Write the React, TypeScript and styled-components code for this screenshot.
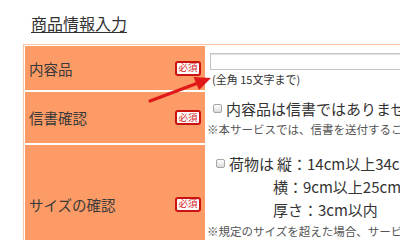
import React from 'react'
import styled, { createGlobalStyle } from 'styled-components'

const GlobalStyle = createGlobalStyle`
  html, body {
    margin: 0;
    padding: 0;
    background: #fff;
    overflow: hidden;
  }
  body {
    font-family: "Noto Sans CJK JP", "Noto Sans", sans-serif;
    color: #333;
  }
`

const Page = styled.div`
  position: relative;
  width: 400px;
  height: 240px;
  padding: 12px 0 0 23px;
  box-sizing: border-box;
  overflow: hidden;
`

const Title = styled.h2`
  margin: 0 0 10px 8px;
  font-size: 16px;
  font-weight: normal;
  line-height: 22px;
  height: 22px;
  text-decoration: underline;
  text-underline-offset: 2px;
  text-decoration-thickness: 1px;
  color: #333;
`

const Table = styled.div`
  display: grid;
  grid-template-columns: 180px 440px;
  grid-template-rows: 44px 51px 118px;
  gap: 2px;
  width: max-content;
  padding: 1px;
  border: 1px solid #fcc4a6;
  background: #fff;
`

const LabelCell = styled.div`
  display: flex;
  align-items: center;
  justify-content: space-between;
  padding: 0 4px;
  background: #fd9b66;
  font-size: 14.5px;
  color: #3a3a3a;
`

const Badge = styled.span`
  display: inline-flex;
  align-items: center;
  justify-content: center;
  width: 26px;
  height: 15px;
  box-sizing: border-box;
  border: 2px solid #cc1111;
  border-radius: 3px;
  background: #fff;
  color: #d42020;
  font-size: 9.5px;
  line-height: 1;
`

const FieldCell = styled.div<{ $top: number }>`
  display: flex;
  flex-direction: column;
  align-items: flex-start;
  padding-top: ${p => p.$top}px;
  background: #fff;
  white-space: nowrap;
  overflow: hidden;
`

const TextInput = styled.input`
  margin: 0 0 0 3px;
  width: 300px;
  height: 17px;
  box-sizing: border-box;
  border: 1px solid #c4c4c4;
  box-shadow: inset 0 1px 1px rgba(0, 0, 0, 0.12);
  padding: 0 3px;
  font-size: 12px;
`

const Hint = styled.div`
  margin: 2px 0 0 5px;
  font-size: 11px;
  line-height: 14px;
  color: #333;
`

const CheckLine = styled.label<{ $indent: number }>`
  display: flex;
  align-items: center;
  height: 23px;
  padding-left: ${p => p.$indent}px;
  font-size: 15px;
  color: #333;
`

const Box = styled.span`
  display: inline-block;
  flex: none;
  width: 9px;
  height: 9px;
  box-sizing: border-box;
  margin-right: 4px;
  border: 1px solid #a6a6a6;
  border-radius: 2px;
  background: linear-gradient(#fdfdfd, #dcdcdc);
`

const Note = styled.div<{ $height: number }>`
  font-size: 11.5px;
  line-height: ${p => p.$height}px;
  color: #555;
`

const SizeLead = styled.span`
  width: 48px;
`

const SizeLines = styled.div`
  display: flex;
  flex-direction: column;
  padding-left: 66px;
`

const SizeLine = styled.div`
  height: 23px;
  line-height: 23px;
  font-size: 15px;
  color: #333;
`

const ArrowLayer = styled.svg`
  position: absolute;
  top: 0;
  left: 0;
  pointer-events: none;
`

const App: React.FC = () => (
  <>
    <GlobalStyle />
    <Page>
      <Title>商品情報入力</Title>
      <Table>
        <LabelCell>
          <span>内容品</span>
          <Badge>必須</Badge>
        </LabelCell>
        <FieldCell $top={7}>
          <TextInput type="text" />
          <Hint>(全角 15文字まで)</Hint>
        </FieldCell>

        <LabelCell>
          <span>信書確認</span>
          <Badge>必須</Badge>
        </LabelCell>
        <FieldCell $top={5}>
          <CheckLine $indent={6}>
            <Box />
            内容品は信書ではありません。
          </CheckLine>
          <Note $height={18}>※本サービスでは、信書を送付することはできません。</Note>
        </FieldCell>

        <LabelCell>
          <span>サイズの確認</span>
          <Badge>必須</Badge>
        </LabelCell>
        <FieldCell $top={7}>
          <CheckLine $indent={9}>
            <Box />
            <SizeLead>荷物は</SizeLead>
            <span>縦：14cm以上34cm以内</span>
          </CheckLine>
          <SizeLines>
            <SizeLine>横：9cm以上25cm以内</SizeLine>
            <SizeLine>厚さ：3cm以内</SizeLine>
          </SizeLines>
          <Note $height={20}>※規定のサイズを超えた場合、サービスをご利用いただけません。</Note>
        </FieldCell>
      </Table>
      <ArrowLayer width="400" height="240" viewBox="0 0 400 240">
        <line x1="150" y1="101" x2="198" y2="83" stroke="#e01818" strokeWidth="3.2" strokeLinecap="round" />
        <polygon points="211,78 199,90 193.5,77" fill="#e01818" />
      </ArrowLayer>
    </Page>
  </>
)

export default App
